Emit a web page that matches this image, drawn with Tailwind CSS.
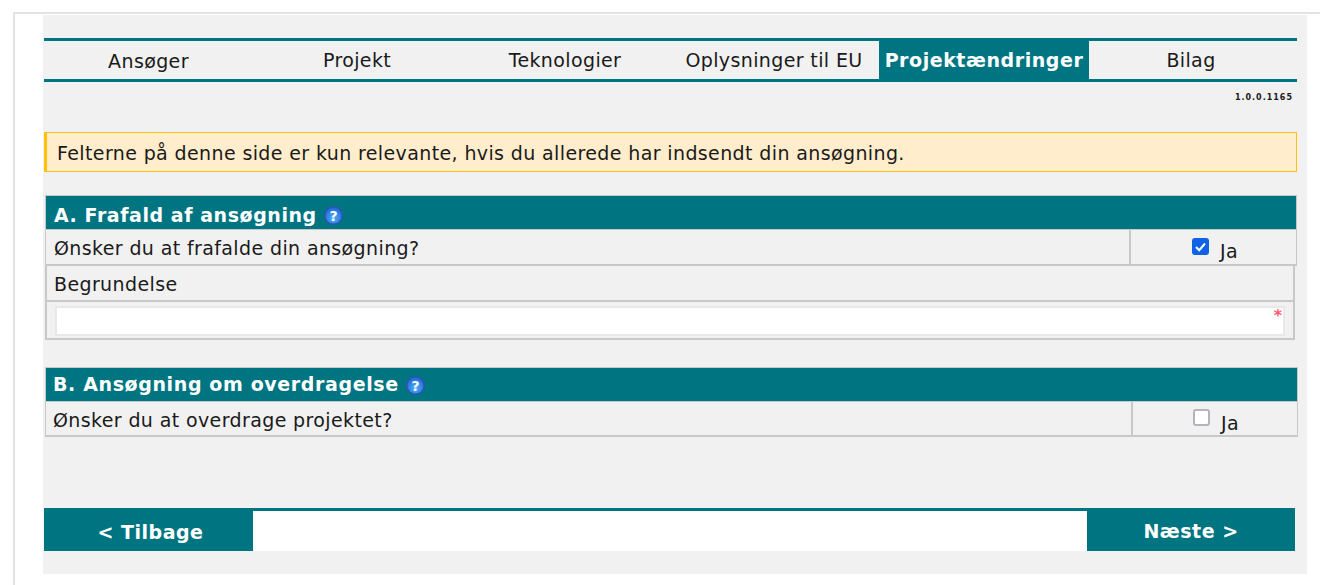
<!DOCTYPE html>
<html lang="da">
<head>
  <meta charset="UTF-8" />
  <title>Projektændringer</title>
  <script src="https://cdn.jsdelivr.net/npm/@tailwindcss/browser@4"></script>
</head>
<body class="bg-white text-[#1a1a1a] font-['DejaVu_Sans',Verdana,sans-serif] text-[19px] tracking-[0.38px] overflow-hidden">
  <svg class="absolute w-0 h-0">
    <defs>
      <radialGradient id="helpFill" cx="50%" cy="65%" r="65%">
        <stop offset="0%" stop-color="#52b0f7"/>
        <stop offset="100%" stop-color="#1f66d8"/>
      </radialGradient>
    </defs>
  </svg>
  <div class="h-[585px] pt-[12px] pl-[13px]">
    <div class="h-[573px] border-t-2 border-l-2 border-[#e3e3e3] pl-[28px] pt-px">
      <main class="w-[1264px] h-[559px] bg-[#f1f1f1] pt-[23px] pl-px">

        <nav class="w-[1253px] h-[44px] flex border-y-[3px] border-[#007582] text-center leading-[39px]">
          <a class="w-[209px] pt-px">Ansøger</a>
          <a class="w-[208px]">Projekt</a>
          <a class="w-[208px]">Teknologier</a>
          <a class="w-[210px]">Oplysninger til EU</a>
          <a class="w-[210px] bg-[#007582] text-white font-bold tracking-[0.56px]">Projektændringer</a>
          <a class="w-[208px] pr-[4px]">Bilag</a>
        </nav>

        <p class="w-[1249px] h-[28px] pt-[11px] text-right text-[8px] leading-[10px] font-bold tracking-[1px]">1.0.0.1165</p>

        <div class="w-[1253px] h-[40px] mt-[22px] pl-[10px] border border-l-[3px] border-[#ffc107] bg-[#ffedcc] leading-[40px]">
          Felterne på denne side er kun relevante, hvis du allerede har indsendt din ansøgning.
        </div>

        <section class="w-[1252px] mt-[23px] ml-px">
          <div class="border border-[#c8c8c8] border-b-2">
            <h2 class="h-[33px] pl-[8px] bg-[#007582] text-white font-bold tracking-[0.56px] flex items-center gap-[7px]">
              <span class="mt-[5px]">A. Frafald af ansøgning</span>
              <svg class="w-[19px] h-[19px] shrink-0 mt-[6px]" viewBox="0 0 19 19"><circle cx="9.5" cy="9.5" r="9.5" fill="#2a55b0"/><circle cx="9.5" cy="9.5" r="8" fill="url(#helpFill)"/><text x="9.5" y="14.5" text-anchor="middle" font-size="14" font-weight="700" letter-spacing="0" fill="#fff">?</text></svg>
            </h2>
            <div class="h-[35px] flex border-t border-[#c8c8c8]">
              <div class="flex-1 pl-[8px] leading-[37px]">Ønsker du at frafalde din ansøgning?</div>
              <label class="w-[167px] border-l-2 border-[#c8c8c8] pl-[61px] flex items-center gap-[11px]">
                <span class="w-[17px] h-[17px] -mt-[1px] rounded-[3px] bg-[#0f62e6] flex items-center justify-center">
                  <svg class="w-[13px] h-[13px]" viewBox="0 0 13 13" fill="none" stroke="#fff" stroke-width="2"><path d="M2 7l3.2 3.2L11 3.5"/></svg>
                </span>
                <span class="mt-[8px]">Ja</span>
              </label>
            </div>
          </div>
          <div class="w-[1250px] border-x-2 border-b-2 border-[#c8c8c8]">
            <div class="h-[36px] pl-[7px] pt-px leading-[35px] border-b-2 border-[#c8c8c8]">Begrundelse</div>
            <div class="h-[36px] pt-[4px] pl-[8px]">
              <div class="relative w-[1230px] h-[30px] bg-white border-2 border-[#e8e8e8]">
                <span class="absolute right-[1px] top-[0px] text-[#ff5a6e] font-bold text-[16px] leading-[16px] tracking-normal">*</span>
              </div>
            </div>
          </div>
        </section>

        <section class="w-[1253px] mt-[27px] ml-px border border-[#c8c8c8] border-b-2">
          <h2 class="h-[33px] pl-[7px] bg-[#007582] text-white font-bold tracking-[0.62px] flex items-center gap-[7px]">
            <span>B. Ansøgning om overdragelse</span>
            <svg class="w-[19px] h-[19px] shrink-0 mt-[2px]" viewBox="0 0 19 19"><circle cx="9.5" cy="9.5" r="9.5" fill="#2a55b0"/><circle cx="9.5" cy="9.5" r="8" fill="url(#helpFill)"/><text x="9.5" y="14.5" text-anchor="middle" font-size="14" font-weight="700" letter-spacing="0" fill="#fff">?</text></svg>
          </h2>
          <div class="h-[34px] flex border-t border-[#c8c8c8]">
            <div class="flex-1 pl-[7px] leading-[37px]">Ønsker du at overdrage projektet?</div>
            <label class="w-[166px] border-l-2 border-[#c8c8c8] pl-[60px] flex items-center gap-[11px]">
              <span class="w-[17px] h-[17px] -mt-[3px] rounded-[3px] bg-white border-2 border-[#b4b4bc]"></span>
              <span class="mt-[10px]">Ja</span>
            </label>
          </div>
        </section>

        <footer class="w-[1251px] h-[43px] mt-[71px] flex bg-white border-t-[3px] border-[#007582] text-white font-bold tracking-[0.5px]">
          <a class="w-[209px] -mt-[3px] h-[43px] pl-[4px] bg-[#007582] text-center leading-[49px]">&lt; Tilbage</a>
          <div class="flex-1"></div>
          <a class="w-[208px] -mt-[3px] h-[43px] bg-[#007582] text-center leading-[46px]">Næste &gt;</a>
        </footer>
      </main>
    </div>
  </div>
</body>
</html>
